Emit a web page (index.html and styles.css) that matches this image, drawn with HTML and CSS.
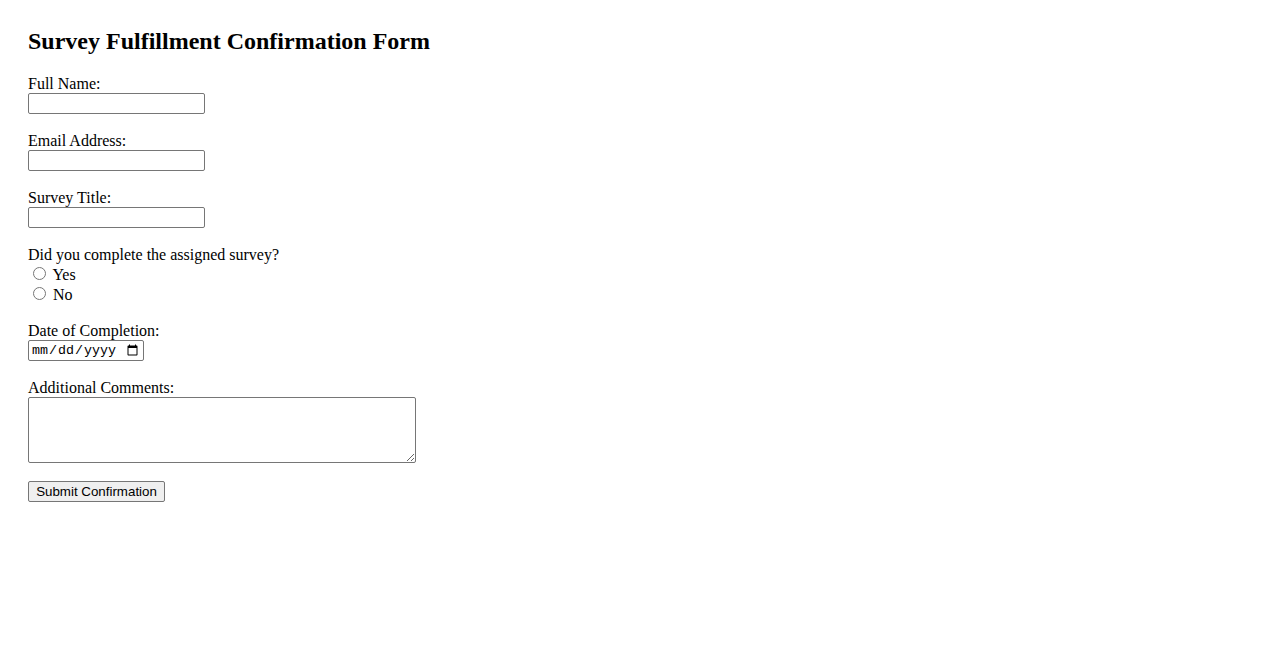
FILE: index.html
```html
<!DOCTYPE html>
<html lang="en">
<head>
<meta charset="utf-8">
<title>Survey Fulfillment Confirmation Form</title>
<link rel="stylesheet" href="styles.css">
</head>
<body>
<div class="page">
  <h2 class="title">Survey Fulfillment Confirmation Form</h2>
  <form class="form">
    <label class="label" for="name">Full Name:</label><br>
    <input class="text" type="text" id="name"><br><br>

    <label class="label" for="email">Email Address:</label><br>
    <input class="text" type="email" id="email"><br><br>

    <label class="label" for="survey">Survey Title:</label><br>
    <input class="text" type="text" id="survey"><br><br>

    <label class="label">Did you complete the assigned survey?</label><br>
    <input class="radio" type="radio" name="done" id="yes"> <label for="yes">Yes</label><br>
    <input class="radio" type="radio" name="done" id="no"> <label for="no">No</label><br><br>

    <label class="label" for="date">Date of Completion:</label><br>
    <input class="date" type="date" id="date"><br><br>

    <label class="label" for="comments">Additional Comments:</label><br>
    <textarea class="comments" id="comments"></textarea><br><br>

    <button class="submit" type="submit">Submit Confirmation</button>
  </form>
</div>
</body>
</html>
```
FILE: styles.css
```css
html, body {
  margin: 0;
  padding: 0;
  background: #fff;
}
body {
  font-family: "Liberation Serif", "Times New Roman", serif;
  font-size: 16px;
  color: #000;
}
.page {
  padding: 28px;
}
.title {
  font-size: 24px;
  font-weight: bold;
  margin: 0 0 20px 0;
}
.form {
  margin: 0;
}
.text {
  font: 13.333px "Liberation Sans", Arial, sans-serif;
  width: 177px;
  height: 21px;
  box-sizing: border-box;
  padding: 1px 2px;
  border: 1px solid #767676;
  border-radius: 2px;
  margin: 0;
}
.radio {
  width: 13px;
  height: 13px;
  margin: 3px 3px 0 5px;
}
.date {
  font: 13.333px "Liberation Mono", "Courier New", monospace;
  width: 116px;
  height: 21px;
  box-sizing: border-box;
  padding: 1px 2px;
  border: 1px solid #767676;
  border-radius: 2px;
  margin: 0;
}
.comments {
  width: 388px;
  height: 66px;
  box-sizing: border-box;
  border: 1px solid #767676;
  border-radius: 2px;
  padding: 2px;
  margin: 0;
  font: 13.333px "Liberation Mono", monospace;
  vertical-align: bottom;
}
.submit {
  font: 13.333px "Liberation Sans", Arial, sans-serif;
  height: 21px;
  width: 137px;
  box-sizing: border-box;
  padding: 1px 6px;
  border: 1px solid #767676;
  border-radius: 2px;
  background: #efefef;
  color: #000;
  margin: 0;
}
```
